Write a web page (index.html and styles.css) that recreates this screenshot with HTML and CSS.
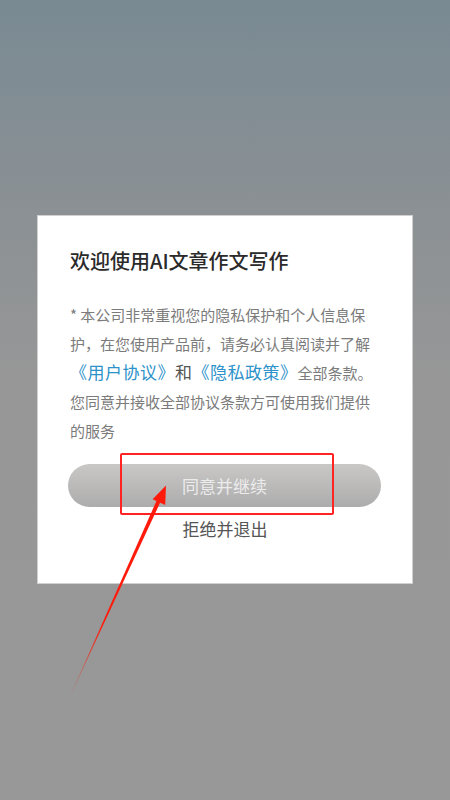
FILE: index.html
```html
<!DOCTYPE html>
<html lang="zh-CN">
<head>
<meta charset="utf-8">
<title>欢迎使用AI文章作文写作</title>
<link rel="stylesheet" href="styles.css">
</head>
<body>
<div class="screen">
  <div class="dialog">
    <h1 class="title">欢迎使用AI文章作文写作</h1>
    <p class="body-text">* 本公司非常重视您的隐私保护和个人信息保护，在您使用产品前，请务必认真阅读并了解<span class="big"><a class="link">《用户协议》</a>和<a class="link">《隐私政策》</a></span>全部条款。您同意并接收全部协议条款方可使用我们提供的服务</p>
    <button class="agree">同意并继续</button>
    <div class="refuse">拒绝并退出</div>
  </div>
  <div class="highlight"></div>
  <svg class="arrow" width="450" height="800" viewBox="0 0 450 800" xmlns="http://www.w3.org/2000/svg">
    <defs>
      <linearGradient id="fade" gradientUnits="userSpaceOnUse" x1="160" y1="498" x2="67" y2="703">
        <stop offset="0" stop-color="#ff1a0a" stop-opacity="1"/>
        <stop offset="0.6" stop-color="#ff1a0a" stop-opacity="1"/>
        <stop offset="1" stop-color="#ff1a0a" stop-opacity="0.1"/>
      </linearGradient>
    </defs>
    <polygon points="161.9,498.8 158.1,497.2 67,703" fill="url(#fade)"/>
    <polygon points="166,485.5 165.2,505 152.6,499.2" fill="#ff1a0a"/>
  </svg>
</div>
</body>
</html>
```

FILE: styles.css
```css
* { box-sizing: border-box; }
html, body { margin: 0; padding: 0; }
body {
  width: 450px;
  height: 800px;
  overflow: hidden;
  font-family: "Noto Sans CJK SC", "Noto Sans", sans-serif;
}
.screen {
  position: relative;
  width: 450px;
  height: 800px;
  padding-top: 215px;
  background: linear-gradient(180deg, #798a93 0px, #8a9094 200px, #979797 380px, #989898 800px);
}
.dialog {
  margin-left: 37px;
  width: 376px;
  height: 369px;
  background: #fff;
  border: 1px solid #d0d0d0;
  padding: 31px 35px 0 32px;
  display: flex;
  flex-direction: column;
}
.title {
  margin: 0;
  font-size: 20px;
  line-height: 28px;
  font-weight: 500;
  color: #2a2a2a;
}
.body-text {
  margin: 25px 0 0 0;
  font-size: 15px;
  line-height: 29px;
  color: #7b7b7b;
}
.big {
  font-size: 17px;
  line-height: 20px;
  letter-spacing: 0.5px;
  color: #555;
}
.link {
  color: #2c92c9;
}
.agree {
  margin: 19px 0 0 -2px;
  width: 313px;
  height: 43px;
  border: none;
  border-radius: 22px;
  background: linear-gradient(180deg, #c9c8c7 0%, #adacac 100%);
  color: #ececec;
  font-family: inherit;
  font-size: 17px;
  padding: 0;
}
.refuse {
  margin-top: 10px;
  margin-left: -32px;
  margin-right: -35px;
  text-align: center;
  font-size: 17px;
  line-height: 24px;
  color: #555;
}
.highlight {
  position: absolute;
  left: 120px;
  top: 453px;
  width: 214px;
  height: 62px;
  border: 2px solid #ff2323;
  border-radius: 2px;
}
.arrow {
  position: absolute;
  left: 0;
  top: 0;
}
```
